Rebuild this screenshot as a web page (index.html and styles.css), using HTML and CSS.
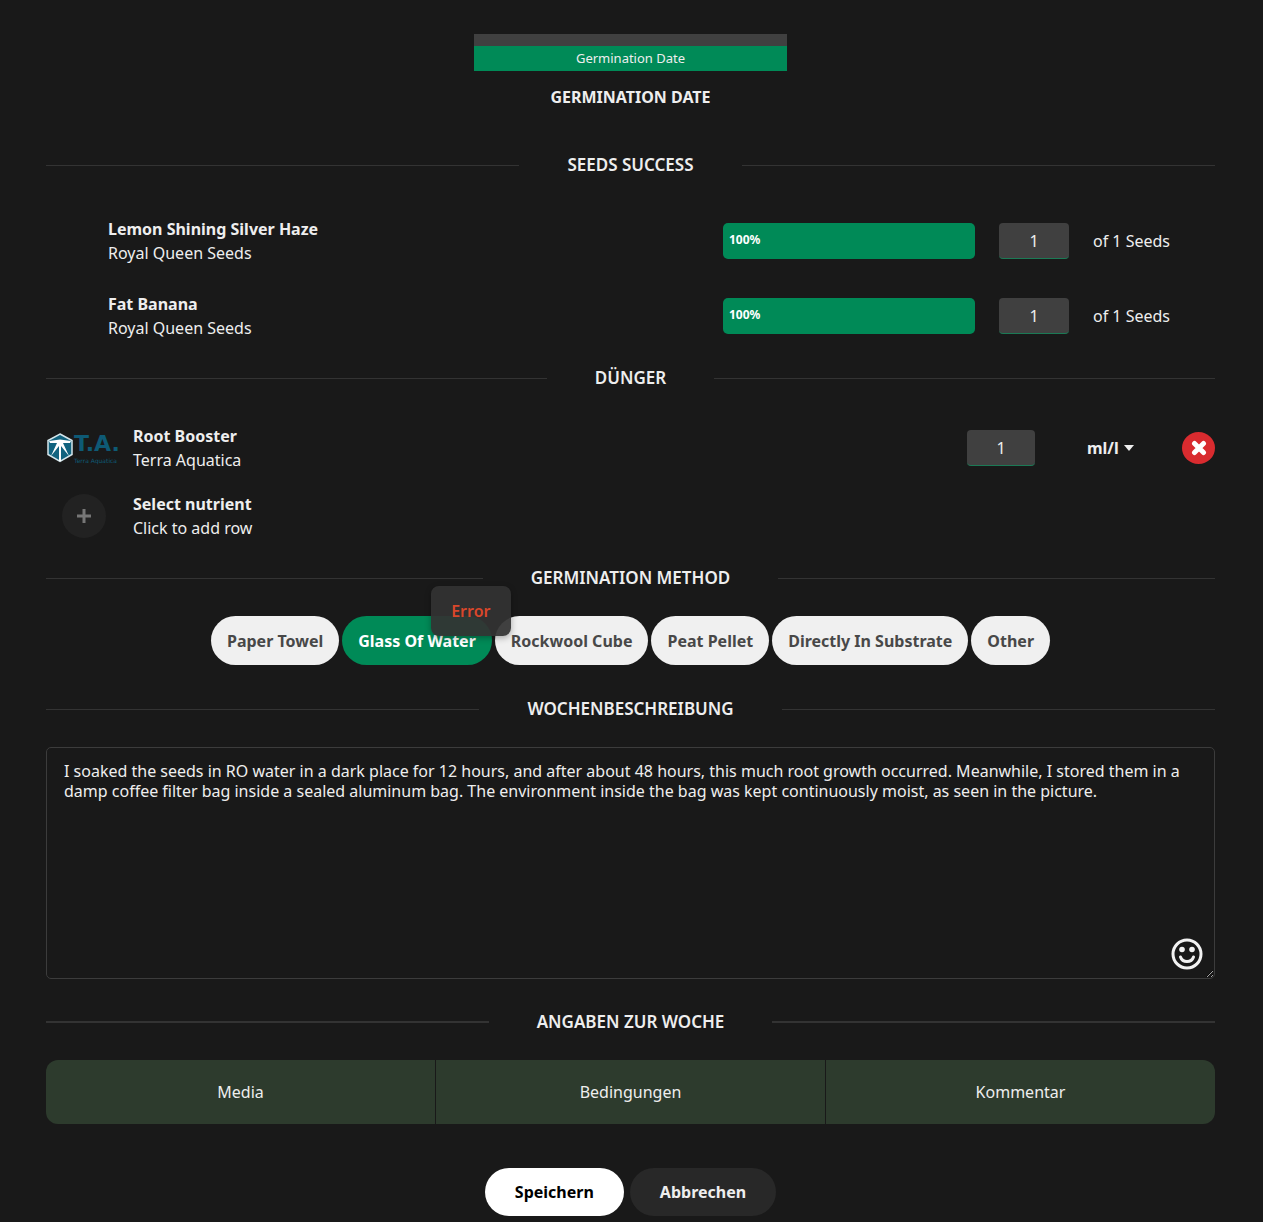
FILE: index.html
```html
<!DOCTYPE html>
<html lang="de">
<head>
  <meta charset="UTF-8" />
  <meta name="viewport" content="width=device-width, initial-scale=1.0" />
  <title>Germination Week</title>
  <link rel="stylesheet" href="styles.css">
</head>
<body>
  <form class="week-form">
    <div class="date-field">
      <button type="button" class="date-box" id="dateBtn">Germination Date</button>
      <label for="dateBtn">GERMINATION DATE</label>
    </div>

    <h2 class="divider">SEEDS SUCCESS</h2>
    <div class="seed-list">
      <div class="seed-row">
        <div class="item-name"><strong>Lemon Shining Silver Haze</strong><span>Royal Queen Seeds</span></div>
        <div class="progress"><div class="progress-bar" style="width: 100%">100%</div></div>
        <input class="amount" id="seed1" type="text" value="1">
        <label for="seed1">of 1 Seeds</label>
      </div>
      <div class="seed-row">
        <div class="item-name"><strong>Fat Banana</strong><span>Royal Queen Seeds</span></div>
        <div class="progress"><div class="progress-bar" style="width: 100%">100%</div></div>
        <input class="amount" id="seed2" type="text" value="1">
        <label for="seed2">of 1 Seeds</label>
      </div>
    </div>

    <h2 class="divider">DÜNGER</h2>
    <div class="nutrient-list">
      <div class="nutrient-row">
        <div class="brand-logo">
          <svg viewBox="0 0 28 32" aria-hidden="true">
            <path d="M14 2 L26 8.500 V22.500 L14 29.500 L2 22.500 V8.500 Z" fill="#12637f" stroke="#d5e6ec" stroke-width="1.500" />
            <path d="M3 9 L14 7.500 L25 9 L24 11 L17 11 L23 24 L15 14 V29 H13 V14 L5 24 L11 11 L4 11 Z" fill="#fff" />
          </svg>
          <div class="brand-text">
            <span class="logo-big">T.A.</span>
            <span class="logo-small">Terra Aquatica</span>
          </div>
        </div>
        <label class="item-name" for="dose"><strong>Root Booster</strong><span>Terra Aquatica</span></label>
        <input class="amount" id="dose" type="text" value="1">
        <div class="unit">
          <select aria-label="Unit">
            <option>ml/l</option>
            <option>g/l</option>
          </select>
          <svg viewBox="0 0 10 6" aria-hidden="true"><path d="M0 0 H10 L5 6 Z" fill="#eee" /></svg>
        </div>
        <button type="button" class="remove" aria-label="Remove">
          <svg viewBox="0 0 16 16" aria-hidden="true"><path d="M3.500 3.500 L12.500 12.500 M12.500 3.500 L3.500 12.500" fill="none" stroke="#fff" stroke-width="5" stroke-linecap="round" /></svg>
        </button>
      </div>
      <div class="nutrient-row">
        <button type="button" class="add" id="addBtn" aria-label="Add">
          <svg viewBox="0 0 14 14" aria-hidden="true"><path d="M7 0 V14 M0 7 H14" fill="none" stroke="#767676" stroke-width="3" /></svg>
        </button>
        <label class="item-name" for="addBtn"><strong>Select nutrient</strong><span>Click to add row</span></label>
      </div>
    </div>

    <h2 class="divider">GERMINATION METHOD</h2>
    <div class="methods">
      <button type="button" class="chip">Paper Towel</button>
      <div class="chip-wrap">
        <button type="button" class="chip active">Glass Of Water</button>
        <div class="tooltip" role="alert">Error</div>
      </div>
      <button type="button" class="chip">Rockwool Cube</button>
      <button type="button" class="chip">Peat Pellet</button>
      <button type="button" class="chip">Directly In Substrate</button>
      <button type="button" class="chip">Other</button>
    </div>

    <h2 class="divider"><label for="description">WOCHENBESCHREIBUNG</label></h2>
    <div class="description">
      <textarea id="description" spellcheck="false">I soaked the seeds in RO water in a dark place for 12 hours, and after about 48 hours, this much root growth occurred. Meanwhile, I stored them in a damp coffee filter bag inside a sealed aluminum bag. The environment inside the bag was kept continuously moist, as seen in the picture.</textarea>
      <button type="button" class="emoji" aria-label="Emoji">
        <svg viewBox="0 0 32 32" aria-hidden="true">
          <circle cx="16" cy="16" r="14" fill="none" stroke="#f2f2f2" stroke-width="3" />
          <circle cx="11" cy="11.500" r="2.800" fill="#f2f2f2" />
          <circle cx="21" cy="11.500" r="2.800" fill="#f2f2f2" />
          <path d="M9.500 19 C11.500 25 20.500 25 22.500 19" fill="none" stroke="#f2f2f2" stroke-width="3" stroke-linecap="round" />
        </svg>
      </button>
    </div>

    <h2 class="divider thick">ANGABEN ZUR WOCHE</h2>
    <div class="tabs">
      <button type="button">Media</button>
      <button type="button">Bedingungen</button>
      <button type="button">Kommentar</button>
    </div>

    <div class="actions">
      <button type="submit" class="save">Speichern</button>
      <button type="button" class="cancel">Abbrechen</button>
    </div>
  </form>
</body>
</html>
```
FILE: styles.css
```css
* {
  box-sizing: border-box;
}
body {
  background-color: #191919;
  color: #eee;
  font-family: "Noto Sans", "Open Sans", sans-serif;
  font-size: 16px;
  line-height: 24px;
  margin: 0;
}
button, input, select, textarea {
  font-family: inherit;
  font-size: 16px;
  color: inherit;
  border: none;
  margin: 0;
  padding: 0;
}
button {
  cursor: pointer;
}
svg {
  display: block;
}
strong {
  font-weight: 700;
}
.week-form {
  padding: 34px 48px 6px 46px;
}
.date-field {
  display: flex;
  flex-direction: column;
  align-items: center;
  gap: 14px;
  margin-bottom: 44px;
  font-weight: 700;
}
.date-box {
  width: 313px;
  max-width: 100%;
  background-color: #008a57;
  border-top: 12px solid #404040;
  font-size: 13px;
  line-height: 25px;
}
.divider {
  display: flex;
  align-items: center;
  gap: 48px;
  margin: 0;
  font-size: 17px;
  font-weight: 600;
  line-height: 24px;
}
.divider::before, .divider::after {
  content: "";
  flex: 1;
  height: 1px;
  background-color: #333;
}
.divider.thick::before, .divider.thick::after {
  height: 2px;
}
.item-name {
  display: flex;
  flex-direction: column;
}
.seed-list {
  display: flex;
  flex-direction: column;
  gap: 27px;
  padding: 40px 0 26px 62px;
}
.seed-row {
  display: grid;
  grid-template-columns: 1fr 252px 70px 122px;
  align-items: center;
  gap: 24px;
}
.progress {
  height: 36px;
  background-color: #404040;
  border-radius: 5px;
  overflow: hidden;
}
.progress-bar {
  height: 100%;
  padding-left: 6px;
  background-color: #008a57;
  color: #fff;
  font-size: 12px;
  font-weight: 700;
  line-height: 34px;
}
.amount {
  width: 100%;
  height: 36px;
  background-color: #404040;
  border-bottom: 1px solid #1b7a55;
  border-radius: 4px;
  text-align: center;
}
.nutrient-list {
  display: flex;
  flex-direction: column;
  gap: 20px;
  padding: 34px 0 26px;
}
.nutrient-row {
  display: grid;
  grid-template-columns: 75px 1fr 68px 99px 81px;
  align-items: center;
}
.nutrient-row .item-name {
  padding-left: 12px;
}
.brand-logo {
  display: flex;
  align-items: center;
  color: #0e5a75;
}
.brand-logo svg {
  flex: none;
  width: 28px;
  height: 32px;
}
.brand-text {
  display: flex;
  flex-direction: column;
  font-family: "DejaVu Sans", sans-serif;
  white-space: nowrap;
}
.logo-big {
  font-size: 22px;
  font-weight: 700;
  line-height: 26px;
}
.logo-small {
  font-size: 6px;
  line-height: 8px;
}
.unit {
  display: grid;
  align-items: center;
  padding-left: 52px;
}
.unit select, .unit svg {
  grid-area: 1 / 1;
}
.unit select {
  appearance: none;
  background-color: transparent;
  font-weight: 700;
}
.unit svg {
  justify-self: end;
  width: 10px;
  height: 6px;
  pointer-events: none;
}
.remove {
  display: grid;
  place-items: center;
  justify-self: end;
  width: 33px;
  height: 32px;
  background-color: #d92b2f;
  border-radius: 50%;
}
.remove svg {
  width: 16px;
  height: 16px;
}
.add {
  display: grid;
  place-items: center;
  justify-self: center;
  width: 44px;
  height: 44px;
  background-color: #222;
  border-radius: 50%;
}
.add svg {
  width: 14px;
  height: 14px;
}
.methods {
  display: flex;
  flex-wrap: wrap;
  justify-content: center;
  gap: 3px;
  padding: 26px 0 32px;
}
.chip {
  height: 49px;
  padding: 0 16px;
  background-color: #f0f0f0;
  border-radius: 25px;
  color: #484848;
  font-weight: 700;
}
.chip.active {
  background-color: #008a57;
  color: #fff;
}
.chip-wrap {
  position: relative;
}
.tooltip {
  position: absolute;
  z-index: 1;
  top: -30px;
  right: -19px;
  width: 80px;
  line-height: 50px;
  text-align: center;
  font-weight: 600;
  color: #d9472b;
  background-color: rgba(51, 51, 51, 0.93);
  border-radius: 8px;
  box-shadow: 0 2px 6px rgba(0, 0, 0, 0.3);
}
.description {
  position: relative;
  padding: 26px 0 31px;
}
.description textarea {
  display: block;
  width: 100%;
  height: 232px;
  padding: 13px 17px;
  background-color: transparent;
  border: 1px solid #3c3c3c;
  border-radius: 5px;
  line-height: 20px;
  resize: vertical;
}
.emoji {
  position: absolute;
  right: 12px;
  bottom: 40px;
  background-color: transparent;
}
.emoji svg {
  width: 32px;
  height: 32px;
}
.tabs {
  display: grid;
  grid-template-columns: repeat(3, 1fr);
  gap: 1px;
  margin: 26px 0 44px;
  border-radius: 12px;
  overflow: hidden;
}
.tabs button {
  height: 64px;
  background-color: #2d3b2d;
}
.actions {
  display: flex;
  justify-content: center;
  gap: 6px;
}
.actions button {
  height: 48px;
  padding: 0 30px;
  border-radius: 24px;
  font-weight: 700;
}
.actions .save {
  background-color: #fff;
  color: #000;
}
.actions .cancel {
  background-color: #282828;
}
```
